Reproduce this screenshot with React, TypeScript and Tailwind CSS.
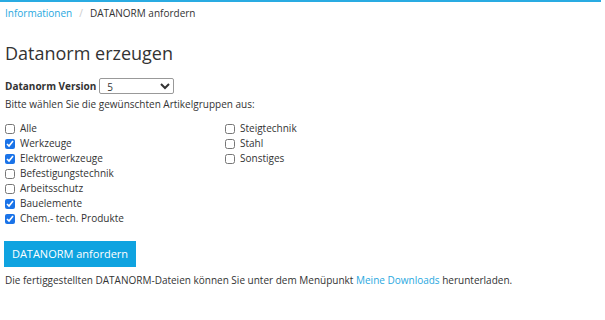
const groupsLeft = [
  { label: "Alle", checked: false },
  { label: "Werkzeuge", checked: true },
  { label: "Elektrowerkzeuge", checked: true },
  { label: "Befestigungstechnik", checked: false },
  { label: "Arbeitsschutz", checked: false },
  { label: "Bauelemente", checked: true },
  { label: "Chem.- tech. Produkte", checked: true },
];

const groupsRight = [
  { label: "Steigtechnik", checked: false },
  { label: "Stahl", checked: false },
  { label: "Sonstiges", checked: false },
];

const Check = ({ label, checked }: { label: string; checked: boolean }) => (
  <label className="flex items-center h-[15px] gap-[5px]">
    <input
      type="checkbox"
      defaultChecked={checked}
      className="w-[10px] h-[10px] m-0 accent-[#1a73e8]"
    />
    <span>{label}</span>
  </label>
);

export default function App() {
  return (
    <div className="w-[605px] h-[320px] overflow-hidden bg-white text-[10px] text-[#333] font-['Open_Sans',sans-serif]">
      <div className="w-[601px] h-[2px] bg-[#29abe2]" />
      <div className="px-[5px]">
        <div className="flex items-center h-[20px] mt-[1px] gap-[7px]">
          <a className="text-[#29a8e0]">Informationen</a>
          <span className="text-[#ccc]">/</span>
          <span>DATANORM anfordern</span>
        </div>

        <h1 className="text-[18px] leading-[26px] mt-[17px] text-[#333]">Datanorm erzeugen</h1>

        <div className="flex items-center mt-[12px] h-[16px] gap-[3px]">
          <span className="font-bold">Datanorm Version</span>
          <select className="w-[75px] h-[16px] border border-[#999] rounded-[2px] text-[10px] pl-[3px] bg-white">
            <option>5</option>
            <option>4</option>
          </select>
        </div>
        <p className="mt-[3px] leading-[15px]">Bitte wählen Sie die gewünschten Artikelgruppen aus:</p>

        <div className="flex mt-[9px]">
          <div className="w-[220px] flex flex-col">
            {groupsLeft.map((g) => (
              <Check key={g.label} {...g} />
            ))}
          </div>
          <div className="flex flex-col">
            {groupsRight.map((g) => (
              <Check key={g.label} {...g} />
            ))}
          </div>
        </div>

        <button className="mt-[15px] -ml-[1px] w-[132px] h-[26px] bg-[#0fa3e0] text-white text-[11px]">
          DATANORM anfordern
        </button>

        <p className="mt-[6px] leading-[15px]">
          Die fertiggestellten DATANORM-Dateien können Sie unter dem Menüpunkt{" "}
          <a className="text-[#29a8e0]">Meine Downloads</a> herunterladen.
        </p>

        <h2 className="text-[18px] leading-[26px] mt-[28px]">Vorhandene Dateien</h2>
      </div>
    </div>
  );
}
